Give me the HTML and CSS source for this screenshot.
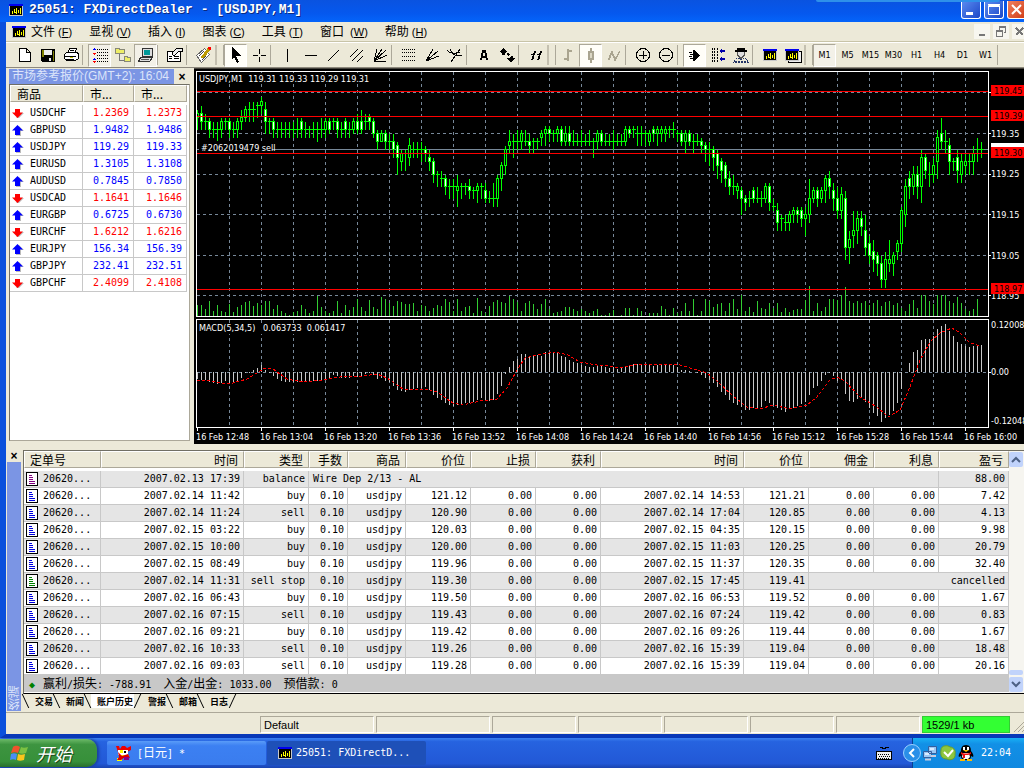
FILE: index.html
```html
<!DOCTYPE html>
<html lang="zh-CN">
<head>
<meta charset="utf-8">
<title>25051: FXDirectDealer - [USDJPY,M1]</title>
<link rel="stylesheet" href="styles.css">
</head>
<body>
<svg class="defs" aria-hidden="true">
  <symbol id="app" viewBox="0 0 14 12"><path fill="#0000f0" d="M0 0h14v2H0z"/><path fill="#c8c8c8" d="M0 2h14v10H0z"/><path fill="#000" d="M1 2h12v9H1z"/><path fill="#ff0" d="M3 7h1v3H3zM5 5h1v4H5zM7 4h1v6H7zM6 8h1v1H6zM9 6h1v3H9zM11 4h1v6h-1z"/></symbol>
  <symbol id="doc" viewBox="0 0 12 14"><path fill="#fff" stroke="#000" d="M.5.500h11v13H.5z"/><path stroke="currentColor" d="M3 3.500h3M3 5.500h4M3 7.500h4M3 9.500h6M3 11.500h6"/></symbol>
  <symbol id="up" viewBox="0 0 12 11"><path fill="#bbb" d="M7 1l5 5H9v5H4V9z"/><path fill="#00f" d="M5.500 0L11 5.500H8V10H3V5.500H0z"/></symbol>
  <symbol id="down" viewBox="0 0 12 11"><path fill="#bbb" d="M4 10h3l5-5H9z"/><path fill="red" d="M5.500 10L0 4.500h3V1h5v3.500h3z"/></symbol>
</svg>
<div class="window">
  <header class="title">
    <svg class="appicon"><use href="#app"/></svg>
    <h1>25051: FXDirectDealer - [USDJPY,M1]</h1>
    <div class="winbtns">
      <button aria-label="最小化"><svg width="20" height="18"><path fill="#fff" d="M5 11h7v3H5z"/></svg></button>
      <button aria-label="最大化"><svg width="20" height="18"><path fill="none" stroke="#fff" d="M4.500 4.500h11v9h-11zM4 5.500h12M4 3.500h12"/></svg></button>
      <button class="close" aria-label="关闭"><svg width="20" height="18"><path stroke="#fff" stroke-width="2" d="M5 4l9 9M14 4l-9 9"/></svg></button>
    </div>
    <span class="behind"></span>
  </header>
  <nav class="menu">
    <svg class="appicon"><use href="#app"/></svg>
    <button>文件<small> (<u>F</u>)</small></button><button>显视<small> (<u>V</u>)</small></button><button>插入<small> (<u>I</u>)</small></button><button>图表<small> (<u>C</u>)</small></button><button>工具<small> (<u>T</u>)</small></button><button>窗口<small> &nbsp;(<u>W</u>)</small></button><button>帮助<small> (<u>H</u>)</small></button>
    <div class="mdi">
      <button aria-label="最小化窗口"><svg width="16" height="14"><path fill="#777" d="M5 9h6v2H5z"/></svg></button>
      <button aria-label="还原窗口"><svg width="16" height="14"><path fill="none" stroke="#777" d="M6.500 5V2.500h6v5H11M3.500 6.500h6v5h-6zM3 5.500h7M6 1.500h7"/></svg></button>
      <button aria-label="关闭窗口"><svg width="16" height="14"><path stroke="#777" stroke-width="2" d="M4 3l7 7M11 3l-7 7"/></svg></button>
    </div>
  </nav>
  <div class="toolbar">
    <button aria-label="新建"><svg><path fill="#fff" stroke="#000" d="M3.500 2.500h7l4 4v9h-11zM10.500 2.500v4h4"/></svg></button>
    <button aria-label="保存"><svg><path d="M2 3h14v13H3l-1-1z"/><path fill="#808000" d="M3 4h2v7H3zM14 5h1v10h-1z"/><path fill="#eee" d="M5 4h8v5H5zM10 12h2v3h-2z"/></svg></button>
    <button aria-label="打印"><svg><path fill="#fff" stroke="#000" d="M5.500 7.500l2-5h7l-2 5M2.500 8.500l2-2h11l1 2v4l-3 2h-9l-2-2zM2 10.500h12M4 13.500h8M8 4.500h4"/><path stroke="#cc0" d="M8 11.500h3"/></svg></button>
    <i></i>
    <button class="on" aria-label="市场参考报价"><svg><path fill="none" stroke="#000" stroke-dasharray="1 1" d="M6 3.500h12M6 6.500h12M6 9.500h12M6 12.500h12M6 15.500h12"/><path fill="#00f" d="M3 2l2 2H1zM3 12l2 2H1z"/><path fill="red" d="M3 9l2-2H1zM3 17l2-2H1z"/></svg></button>
    <button aria-label="导航"><svg><path fill="none" stroke="#777" d="M5.500 6v8h5"/><path fill="#ee6" stroke="#887" d="M1.500 2.500h4v1h5v4h-9zM10.500 10.500h3v1h3v4h-6z"/></svg></button>
    <button class="on" aria-label="终端"><svg><path fill="#ddd" stroke="#333" d="M5.500 2.500h10v8h-10zM3.500 11.500h12l-3 4H1.500z"/><path fill="#099" d="M7 4h6v5H7z"/><path stroke="#555" d="M4 13.500h8"/></svg></button>
    <i></i>
    <button aria-label="属性"><svg><path fill="#fff" stroke="#000" d="M1.500 5.500h13v10h-13zM3 10.500h3M3 12.500h3M8 10.500h5M8 12.500h5"/><path fill="#eee" stroke="#000" d="M6 7l4-4 1-1h5v3h-3l-4 4H7z"/></svg></button>
    <i></i>
    <button aria-label="新订单"><svg><path fill="#fff" stroke="#666" d="M1.500 9.500l8-7 5 6-8 8z"/><path stroke="#444" d="M4 10l5-5M6 12l5-5M7 14l4-4"/><path stroke="#b90" stroke-width="3" d="M7 12l7-9"/><path fill="red" d="M13 1h3v3h-2z"/></svg></button>
    <i class="grip"></i>
    <button class="on white" aria-label="光标"><svg><path d="M5 1l9 9H9l3 6-2 1-3-6-2 2z"/></svg></button>
    <button aria-label="十字准线"><svg><path stroke="#000" d="M3 9.500h5M11 9.500h5M9.500 3v5M9.500 11v5"/></svg></button>
    <i></i>
    <button aria-label="垂直线"><svg><path stroke="#000" d="M8.500 3v13"/></svg></button>
    <button aria-label="水平线"><svg><path stroke="#000" d="M3 9.500h12"/></svg></button>
    <button aria-label="趋势线"><svg><path stroke="#000" d="M3 15L14 4"/></svg></button>
    <button aria-label="通道"><svg><path stroke="#000" d="M2 11l8-8M4 15L15 4M9 16l6-6"/></svg></button>
    <button aria-label="江恩扇形"><svg><path stroke="#000" d="M3 15L6 3M3 15L11 3M3 15L15 4M3 15L16 9M3 15h12"/></svg></button>
    <i></i>
    <button aria-label="斐波那契回撤"><svg><path stroke="#000" stroke-dasharray="1 1" d="M2 3.500h14M2 6.500h14M2 10.500h14M2 14.500h14"/></svg></button>
    <button aria-label="斐波那契扇形"><svg><path stroke="#000" d="M3 15L10 3M3 15L15 5M3 15L16 10"/></svg></button>
    <button aria-label="安德鲁分叉"><svg><path fill="none" stroke="#000" d="M5 16L14 3M1 4c2 3 7 4 13 2M4 3c2 6 6 7 12 7"/></svg></button>
    <i></i>
    <button aria-label="文字"><svg><path fill="none" stroke="#000" stroke-width="2" d="M6 14L8 5h2l2 9M6 11h6"/></svg></button>
    <button aria-label="箭头"><svg><path d="M1 6l4-4 4 4-2 1v2H4V7zM9 12h3l1-2h2v2h2l-3 4h-2zM8 8l2-1 2 2-2 1z"/></svg></button>
    <i></i>
    <button aria-label="指标"><svg><path fill="none" stroke="#000" d="M4 14c2 0 2-9 5-9M4 8.500h4M10 14c2 0 2-9 5-9M10 8.500h4"/><path fill="none" stroke="#000" d="M5 14c2 0 1-8 4-8M11 14c2 0 1-8 4-8"/></svg></button>
    <i class="grip"></i>
    <button aria-label="柱状图"><svg><path stroke="#aaa590" stroke-width="2" d="M9 3v12M5 13h4M9 5h4"/></svg></button>
    <button class="on white" aria-label="蜡烛图"><svg><path fill="#dcd8c4" stroke="#aaa590" stroke-width="2" d="M9 2v3M9 14v3M7 6h4v7H7z"/></svg></button>
    <button aria-label="折线图"><svg><path fill="none" stroke="#aaa590" d="M3 14L7 5l3 8 5-8M4 14L7 7l3 8 4-8"/></svg></button>
    <i></i>
    <button aria-label="放大"><svg><circle cx="9" cy="9" r="6.500" fill="none" stroke="#000"/><path stroke="#000" d="M5 9.500h8M9.500 5v8"/></svg></button>
    <button aria-label="缩小"><svg><circle cx="9" cy="9" r="6.500" fill="none" stroke="#000"/><path stroke="#000" d="M5 9.500h8"/></svg></button>
    <i></i>
    <button class="on white" aria-label="自动滚动"><svg><path d="M7 4h2l5 5.500L9 15H7zM3 6h3v1H3zM4 8h3v1H4zM3 10h3v1H3zM4 12h3v1H4z"/></svg></button>
    <button aria-label="图表平移"><svg><path fill="none" stroke="#000" stroke-dasharray="2 1" d="M3.500 2v14M5.500 2v14M8.500 2v14"/><path fill="#00a" d="M10 5l3-3v2h3v2h-3v2zM10 13l3-3v2h3v2h-3v2z"/></svg></button>
    <button aria-label="智能交易"><svg><path d="M5 2h8v2h2v2H3V4h2z"/><path fill="#ddd" stroke="#555" d="M5.500 6v3l3 3h1l3-3V6"/><path fill="none" stroke="#236" stroke-dasharray="2 1" d="M2 16c1-4 4-4 5-4l2 2 2-2c2 0 4 1 5 4zM3 15.500h12"/></svg></button>
    <i></i>
    <button aria-label="图表窗口"><svg><use href="#app" x="2" y="3" width="14" height="12"/></svg></button>
    <button aria-label="多图表窗口"><svg><path fill="#eee" stroke="#000" d="M4.500 5.500h13v11h-13z"/><use href="#app" x="1" y="3" width="14" height="12"/></svg></button>
    <i class="grip"></i>
    <button class="on">M1</button><button>M5</button><button>M15</button><button>M30</button><button>H1</button><button>H4</button><button>D1</button><button>W1</button>
    <i></i>
  </div>
  <main class="work">
    <section class="market">
      <div class="caption"><h2>市场参考报价(GMT+2): 16:04</h2><button aria-label="关闭报价">×</button></div>
      <div class="well">
        <table class="quotes">
          <colgroup><col class="q1"><col class="q2"><col></colgroup>
          <thead><tr><th>商品</th><th>市...</th><th>市...</th></tr></thead>
          <tbody id="quotes"></tbody>
        </table>
      </div>
    </section>
    <section class="chart"><svg id="chart" role="img" aria-label="USDJPY,M1"></svg></section>
  </main>
  <section class="terminal">
    <div class="side"><button aria-label="关闭终端">×</button><h2>终端</h2></div>
    <div class="tbody">
      <div class="grid">
        <div class="gridmain">
          <table class="orders">
            <colgroup><col class="c77"><col class="c143"><col class="c65"><col class="c39"><col class="c58"><col class="c65"><col class="c65"><col class="c65"><col class="c143"><col class="c65"><col class="c65"><col class="c65"><col></colgroup>
            <thead><tr><th>定单号</th><th>时间</th><th>类型</th><th>手数</th><th>商品</th><th>价位</th><th>止损</th><th>获利</th><th>时间</th><th>价位</th><th>佣金</th><th>利息</th><th>盈亏</th></tr></thead>
            <tbody id="orders"></tbody>
          </table>
          <p class="sum"><span class="dot">◆</span><span class="zh">赢利</span>/<span class="zh">损失</span>: -788.91&nbsp; <span class="zh">入金</span>/<span class="zh">出金</span>: 1033.00&nbsp; <span class="zh">预借款</span>: 0</p>
        </div>
        <div class="scroll">
          <button aria-label="向上"><svg width="14" height="15"><path fill="none" stroke="#4d6185" stroke-width="2" d="M3 10l4-4 4 4"/></svg></button>
          <span class="thumb"></span>
          <button aria-label="向下"><svg width="14" height="15"><path fill="none" stroke="#4d6185" stroke-width="2" d="M3 5l4 4 4-4"/></svg></button>
        </div>
      </div>
      <div class="tabs"><button>交易</button><button>新闻</button><button class="active">账户历史</button><button>警报</button><button>邮箱</button><button class="last">日志</button></div>
    </div>
  </section>
  <footer class="status"><span class="help"></span><span class="wide">Default</span><span class="wide"></span><span></span><span></span><span></span><span></span><span></span><span class="net">1529/1 kb</span><svg width="12" height="16"><path stroke="#aca899" d="M2 16L12 6M6 16l6-6M10 16l2-2"/></svg></footer>
</div>
<div class="taskbar">
  <button class="start"><svg width="20" height="20"><path fill="#f0532c" d="M3 4c3-2 5-1 7 0L8 10c-2-1-4-1-7 0z"/><path fill="#7cc142" d="M11 4c2 1 4 1 7 0l-2 6c-3 1-5 1-7 0z"/><path fill="#4a8df6" d="M1 11c2-1 4-1 6 0l-1 6c-2-1-4-1-6 0z"/><path fill="#fbc61c" d="M8 11c2 1 4 1 7 0l-1 6c-3 1-5 1-7 0z"/></svg>开始</button>
  <button class="task"><svg width="18" height="18"><path fill="#e00" d="M1 2h3l1 3 2-3h3l2 2 4-2v4l-4 2H3z"/><path fill="#fff" d="M3 6h10v5H3z"/><path fill="#ff0" d="M5 6h3v3H5zM4 11h10v2H4zM2 14h5v3H2z"/><path d="M9 7h2v2H9zM5 13h2v1H5z"/><path fill="#d00" d="M3 8l4 4 6-2 2 4-5-1-4 3H2l2-3z"/><path fill="#808" d="M9 13h5v3H9z"/></svg><span>[<span class="zh">日元</span>] *</span></button>
  <button class="task current"><svg class="appicon"><use href="#app"/></svg>25051: FXDirectD...</button>
  <div class="room"></div>
  <svg class="kbd" width="18" height="16"><path fill="#eee" stroke="#000" d="M1.500 6.500h15v8h-15z"/><path fill="none" stroke="#000" stroke-dasharray="1 1" d="M3 9.500h12M4 11.500h11M3 13.500h12"/><path fill="none" stroke="#000" d="M5 2.500h2l1 1h2l1-1h3"/></svg>
  <div class="tray">
    <svg class="arrow" width="18" height="20"><circle cx="9" cy="10" r="8.500" fill="#2a8fe8" stroke="#9cd0ff"/><path fill="none" stroke="#fff" stroke-width="2" d="M11 6l-4 4 4 4"/></svg>
    <svg width="16" height="18"><path fill="#9cc8f4" stroke="#345f9e" d="M6.500 2.500h8v7h-8zM1.500 7.500h8v6h-8z"/><path fill="#dcecff" d="M3 9h4v2H3zM8 4h4v2H8z"/><path stroke="#ccd" stroke-width="2" d="M3 15.500h6M9 12h5"/></svg>
    <svg width="18" height="18"><path fill="#8dc63f" stroke="#6b9f2a" d="M2 6c0-5 7-5 9-3 4 0 6 4 5 7 1 5-5 7-8 5-5 0-7-3-6-9z"/><path fill="none" stroke="#fff" stroke-width="2" d="M5 8l4 4 5-6"/></svg>
    <svg width="16" height="18"><path d="M8 1c4 0 5 3 5 6 2 2 3 5 2 6l-2-1c0 3-2 4-5 4s-5-1-5-4l-2 1c-1-1 0-4 2-6 0-3 1-6 5-6z"/><path fill="#fff" d="M5 3h2v3H5zM9 3h2v3H9zM5 9h6l1 4-2 2H6l-2-2z"/><path fill="#fb0" d="M5 6h6l-3 2zM2 15h5v2H2zM9 15h5v2H9z"/><path fill="#e11" d="M3 8c3 2 7 2 10 0v2c-2 1-4 1-6 1v3H5v-3l-2-1z"/></svg>
    <time>22:04</time>
  </div>
</div>
<script src="app.js"></script>
</body>
</html>
```
FILE: styles.css
```css
* { box-sizing: border-box; }
body { margin: 0; height: 100vh; min-height: 600px; display: flex; flex-direction: column; overflow: hidden; font: 10px/16px "DejaVu Sans Mono", "Noto Sans CJK SC", monospace; color: #000; background: #2158d8; }
button { font: inherit; color: inherit; border: 0; padding: 0; background: none; }
h1, h2, p { margin: 0; font-size: inherit; font-weight: normal; }
table { border-collapse: separate; border-spacing: 0; table-layout: fixed; width: 100%; }
svg { display: block; flex: none; }
.defs { position: absolute; width: 0; height: 0; }
.zh { font: 12px/16px "Noto Sans CJK SC", sans-serif; }
.appicon { width: 14px; height: 12px; shape-rendering: crispEdges; }

.window { flex: 1; min-height: 0; display: flex; flex-direction: column; border-left: 6px solid #0a50dc; border-bottom: 4px solid #0838b8; background: #ece9d8; }
.title { flex: none; position: relative; height: 22px; margin-left: -6px; padding: 0 0 2px 9px; display: flex; align-items: center; gap: 6px; color: #fff; background: linear-gradient(#0a53e0, #0558ee 60%, #0464fa); overflow: hidden; }
.title h1 { flex: 1; font: bold 13px/18px "Liberation Mono", monospace; text-shadow: 1px 1px #0a2a80; }
.winbtns { display: flex; gap: 3px; margin-right: -3px; }
.winbtns button { width: 20px; height: 18px; border: 1px solid #fff; border-top: 0; border-radius: 0 0 3px 3px; background: linear-gradient(135deg, #5b8bf0, #1c48c8); }
.winbtns svg { margin-left: -1px; }
.winbtns .close { background: linear-gradient(135deg, #f08060, #d03c14); }
.behind { position: absolute; top: 0; right: 24px; width: 184px; height: 2px; background: #2e90ea; border-radius: 0 0 4px 4px; }

.menu { flex: none; height: 20px; display: flex; align-items: center; padding-left: 6px; font: 12px/18px "Noto Sans CJK SC", sans-serif; border-bottom: 1px solid #c8c4a8; }
.menu > button { margin-left: 5px; padding-right: 12px; white-space: nowrap; }
.menu small { font: 11px/18px "Liberation Sans", sans-serif; }
.mdi { margin-left: auto; margin-right: -4px; display: flex; gap: 3px; }
.mdi button { width: 16px; height: 15px; background: #f7f6ef; }
.mdi svg { shape-rendering: crispEdges; }

.toolbar { flex: none; height: 26px; display: flex; align-items: center; padding: 1px 0 1px 7px; border-bottom: 1px solid #8c887c; border-top: 1px solid #fff; font: 9px/18px "DejaVu Sans Condensed", "DejaVu Sans", sans-serif; }
.toolbar button { flex: none; width: 23px; height: 23px; display: flex; align-items: center; justify-content: center; border: 1px solid transparent; }
.toolbar svg { width: 18px; height: 18px; shape-rendering: crispEdges; }
.toolbar .on { border-color: #aca899 #fff #fff #aca899; background: #f3f1e8; }
.toolbar .white { background: #fffef8; }
.toolbar i { flex: none; width: 6px; height: 20px; border-left: 1px solid #aca899; }
.toolbar .grip { width: 9px; border-left: 2px solid #c4c0b0; border-right: 1px solid #aca899; }

.work { flex: 1; min-height: 0; display: flex; }
.market { flex: none; width: 188px; padding: 1px 4px 3px 3px; display: flex; flex-direction: column; }
.caption { display: flex; height: 15px; font: 12px/14px "Liberation Sans", "Noto Sans CJK SC", sans-serif; color: #dce4fa; }
.caption h2 { flex: 1; padding-left: 3px; background: #7b95e4; white-space: nowrap; overflow: hidden; }
.caption button { width: 16px; color: #000; font: bold 12px/14px "Liberation Sans", sans-serif; }
.well { flex: 1; background: #fff; border: 1px solid #aca899; border-left-color: #716f64; border-top-color: #716f64; }
th { font: 12px/14px "Noto Sans CJK SC", sans-serif; height: 17px; padding: 0; background: #ece9d8; border: 1px solid #fff; border-right-color: #aca899; border-bottom-color: #aca899; white-space: nowrap; overflow: hidden; }
td { height: 17px; padding: 0 3px 0 0; line-height: 16px; border-right: 1px solid #c8c8c8; border-bottom: 1px solid #c8c8c8; text-align: right; white-space: nowrap; overflow: hidden; }
tbody::before { content: ""; display: block; height: 3px; }
.q1 { width: 73px; } .q2 { width: 51px; }
.well { padding-right: 2px; }
.quotes th { text-align: left; padding-left: 6px; }
.quotes td { padding-right: 4px; }
.quotes td:first-child { padding: 0 2px; color: #000; text-align: left; }
.sym { display: flex; align-items: center; gap: 6px; }
.sym svg { width: 12px; height: 11px; }
.rise td { color: #00f; } .fall td { color: #f00; }

.chart { flex: 1; min-width: 0; background: #000; border-top: 1px solid #44423c; overflow: hidden; }
.chart svg { width: 100%; height: 100%; font: 9px "DejaVu Sans Condensed", "DejaVu Sans", sans-serif; shape-rendering: crispEdges; }
.grid-l { stroke: #778899; stroke-dasharray: 3 3; }
.level { stroke: #f00; } .bid { stroke: #778899; }
.frame { fill: none; stroke: #fff; }
.wick, .body { stroke: #0f0; } .hollow { fill: #000; } .solid { fill: #fff; }
.vol { stroke: #32cd32; } .macd { stroke: #c8c8c8; }
.signal { fill: none; stroke: #f00; stroke-dasharray: 3 2; }
.lbl { fill: #fff; } .dark { fill: #000; } .tag { fill: #f00; }

.terminal { flex: none; display: flex; padding-top: 6px; }
.side { flex: none; width: 17px; padding: 0 2px 1px 1px; display: flex; flex-direction: column; }
.side button { height: 12px; font: bold 12px/10px "Liberation Sans", sans-serif; }
.side h2 { flex: 1; writing-mode: vertical-rl; transform: rotate(180deg); background: #7b95e4; color: #dce4fa; font: 12px/14px "Noto Sans CJK SC", sans-serif; padding-top: 1px; }
.tbody { flex: 1; min-width: 0; }
.grid { display: flex; border-top: 1px solid #716f64; border-left: 1px solid #716f64; border-bottom: 1px solid #000; background: #fff; }
.gridmain { flex: 1; min-width: 0; padding-bottom: 1px; }
.c77 { width: 77px; } .c143 { width: 143px; } .c65 { width: 65px; } .c39 { width: 39px; } .c58 { width: 58px; }
.orders th { text-align: right; padding-right: 5px; }
.orders th:first-child { text-align: left; padding-left: 5px; }
.orders tbody tr:nth-child(odd) { background: #e5e5e5; }
.orders td:first-child { padding-left: 2px; }
.orders .left { text-align: left; padding-left: 4px; }
.ord { display: flex; align-items: center; gap: 5px; }
.ord svg { width: 12px; height: 14px; shape-rendering: crispEdges; }
.sum { height: 17px; line-height: 16px; background: #c8c8c8; white-space: pre; }
.dot { display: inline-block; width: 19px; padding-left: 5px; color: #008000; }
.scroll { flex: none; width: 15px; display: flex; flex-direction: column; background: #f6f5f0; padding: 1px 0; }
.scroll button { width: 14px; height: 15px; border-radius: 2px; background: #c1d3fb; }
.thumb { height: 5px; width: 14px; margin: auto 0 2px; border-radius: 2px; background: #c1d3fb; }
.tabs { display: flex; height: 18px; padding-left: 2px; font: bold 9px/16px "Noto Sans CJK SC", sans-serif; }
.tabs button { position: relative; height: 15px; padding: 0 3px 0 10px; }
.tabs button::before, .tabs .active::after, .tabs .last::after { content: ""; position: absolute; top: 0; bottom: 1px; left: 0; width: 10px; border-left: 1px solid #000; transform: skewX(25deg); }
.tabs .active, .tabs .last { padding-right: 5px; }
.tabs .active { background: linear-gradient(#fff, #fff) 4px 0 / calc(100% - 8px) 14px no-repeat; }
.tabs .active::after, .tabs .last::after { left: auto; right: 0; border-left: 0; border-right: 1px solid #000; transform: skewX(-25deg); }
.tabs .active + button::before { border: 0; }

.status { flex: none; height: 22px; display: flex; gap: 2px; padding: 3px 0 1px; border-top: 1px solid #aca899; font: 11px/17px "Liberation Sans", sans-serif; }
.status span { flex: none; width: 84px; padding-left: 3px; border: 1px solid #aca899; border-right-color: #fff; border-bottom-color: #fff; line-height: 16px; }
.status .help { flex: 1; border-color: transparent; }
.status .wide { width: 114px; }
.status .net { width: 88px; background: #3f3; border-color: #3c3; }

.taskbar { flex: none; height: 30px; display: flex; align-items: center; color: #fff; background: linear-gradient(#3b80f0, #2663e0 12%, #2258d6 85%, #1a44b0); }
.start { width: 97px; height: 28px; display: flex; align-items: center; gap: 6px; padding-left: 10px; border-radius: 0 10px 10px 0; background: linear-gradient(#6cb968, #3d9440 20%, #37903a 80%, #2a6e2c); font: italic 18px/24px "Noto Sans CJK SC", sans-serif; text-shadow: 1px 1px #1a4a1c; box-shadow: 2px 0 3px #1a3f9a; }
.task { width: 159px; height: 24px; margin-left: 10px; display: flex; align-items: center; gap: 4px; padding-left: 8px; border-radius: 2px; background: linear-gradient(#5a9cf8, #3c80f2 20%, #3a7cee); text-align: left; white-space: nowrap; }
.current { margin-left: 1px; padding-left: 11px; background: #1e50b8; }
.room { flex: 1; }
.kbd { margin-right: 19px; shape-rendering: crispEdges; }
.tray { height: 30px; display: flex; align-items: center; gap: 1px; padding-right: 13px; background: linear-gradient(#18b0f4, #1290e6 20%, #1088e0); border-left: 1px solid #0a4090; }
.arrow { margin-left: -10px; }
.tray time { margin-left: 6px; }
```
FILE: app.js
```js
const quotes = `USDCHF 1.2369 1.2373 fall
GBPUSD 1.9482 1.9486 rise
USDJPY 119.29 119.33 rise
EURUSD 1.3105 1.3108 rise
AUDUSD 0.7845 0.7850 rise
USDCAD 1.1641 1.1646 fall
EURGBP 0.6725 0.6730 rise
EURCHF 1.6212 1.6216 fall
EURJPY 156.34 156.39 rise
GBPJPY 232.41 232.51 rise
GBPCHF 2.4099 2.4108 fall`;
document.getElementById('quotes').innerHTML = quotes.split('\n').map(line => {
  const [name, bid, ask, dir] = line.split(' ');
  return `<tr class="${dir}"><td><span class="sym"><svg><use href="#${dir === 'rise' ? 'up' : 'down'}"/></svg>${name}</span></td><td>${bid}</td><td>${ask}</td></tr>`;
}).join('');

const first = color => `<td><span class="ord"><svg color="${color}"><use href="#doc"/></svg>20620...</span></td>`;
const orders = `02.14 11:42|buy|121.12|02.14 14:53|121.21|7.42
02.14 11:24|sell|120.90|02.14 17:04|120.85|4.13
02.15 03:22|buy|120.03|02.15 04:35|120.15|9.98
02.15 10:00|buy|120.00|02.15 11:03|120.25|20.79
02.15 08:49|buy|119.96|02.15 11:37|120.35|32.40
02.14 11:31|sell stop|119.30|02.15 17:45|119.41|cancelled
02.16 06:43|buy|119.50|02.16 06:53|119.52|1.67
02.16 07:15|sell|119.43|02.16 07:24|119.42|0.83
02.16 09:21|buy|119.42|02.16 09:26|119.44|1.67
02.16 10:33|sell|119.26|02.16 15:39|119.04|18.48
02.16 09:03|sell|119.28|02.16 15:39|119.04|20.16`;
document.getElementById('orders').innerHTML =
  `<tr>${first('#800080')}<td>2007.02.13 17:39</td><td>balance</td><td colspan="9" class="left">Wire Dep 2/13 - AL</td><td>88.00</td></tr>` +
  orders.split('\n').map(line => {
    const [opened, type, open, closed, close, profit] = line.split('|');
    const cancelled = profit === 'cancelled';
    return `<tr>${first(cancelled ? '#008000' : '#0000e0')}<td>2007.${opened}</td><td>${type}</td><td>0.10</td><td>usdjpy</td><td>${open}</td><td>0.00</td><td>0.00</td><td>2007.${closed}</td><td>${close}</td>` +
      (cancelled ? '<td colspan="3">cancelled</td>' : `<td>0.00</td><td>0.00</td><td>${profit}</td>`) + '</tr>';
  }).join('');

// Each bar: high, low, open/close top, open/close bottom (pips above 119.00); f = falling
const bars = `41 36 40 39,42 36 40 38f,40 36 38,39 34 38 36f,38 34 36,38 33 36,39 34 38 36,39 36 38,39 34 38 36f,38 34 36,39 34 38 36,41 36 39 38,42 38 41 39,43 38 41,43 38 41,43 39 42,44 40 43 42,43 35 41 38f,39 35 38,39 34 38 36f,38 34 36,38 34 36,38 34 36,38 34 36,38 34 36,39 34 36,39 34 38 36f,38 34 36,37 34 36,38 34 36,38 33 36,39 34 36,39 34 38 36,39 35 38 36f,39 36 38,39 34 38 36f,38 34 36,39 34 38 36f,38 34 36,39 35 38 36,40 35 38 36f,41 35 38 36f,40 36 38,40 36 39 38f,39 34 38 35f,36 31 35 33f,36 33 35 33,36 31 35 33f,35 31 33,35 29 33 31f,33 25 32 29f,31 26 30 28,31 26 30,34 27 32 29,33 29 31,33 29 31,33 28 31,32 28 31 30f,31 26 29 28f,29 23 28 25f,26 22 25,26 22 24,25 20 24 22f,24 19 22,24 19 22,25 17 22 21,23 19 22,23 20 22,24 19 22 21f,22 19 21,23 18 22 21,23 19 22,23 18 21 19f,21 18 19,23 17 19,25 17 24 19,28 21 27 24,32 25 31 27,36 30 33 32,35 29 33,36 31 33,36 31 35 33,36 32 33,35 30 33 32f,34 30 33,34 31 33,36 32 35 34,37 32 36 35,37 33 36 35f,36 33 35,37 33 36 35,37 32 36 33f,37 32 35 33,37 32 35 33f,36 32 33,35 32 33,36 32 33,35 32 33,36 32 33,34 29 33,36 31 35 33,36 32 35 33f,35 32 33,35 32 33,36 31 33,35 32 33,35 32 33,37 32 36 33,37 34 36 35f,37 34 36,37 32 35,37 32 35,36 32 35,36 32 35 33,37 33 36 35f,37 32 36 35,37 33 36 35,37 33 36 35,37 34 36,38 34 36,36 33 35,36 32 35 33f,36 30 35 33,36 32 35 33f,35 30 33,35 32 33,34 30 33 32f,33 28 32 31f,33 27 31,32 26 31 29f,31 24 30 27f,29 23 28 26f,28 22 27 24f,26 20 24 22f,25 20 22,23 19 22 21,22 15 21 19f,20 16 19 18f,21 17 19,22 18 21 19f,22 18 19,21 17 19,23 18 22 19,23 16 22 18f,19 16 17,18 11 16 13f,15 11 14,15 11 13,16 11 15 13,17 13 16 15,17 13 16 15f,17 12 16 14f,17 10 15 14,24 13 19 15,22 18 21 19,22 17 21 19f,22 18 21 19,25 18 24 21,26 19 24 22f,23 16 21 19f,22 14 19 16f,22 14 20 16,21 4 19 7f,11 3 9 7,16 7 11 10,16 8 14 11,16 10 14 12f,15 5 11 7f,10 3 8 5f,9 1 6 4f,6 0 5 3f,5 -3 3 -1f,6 -3 4 -1,9 1 4 3,6 0 5 3,9 4 8 6,17 6 16 8,24 12 22 15,26 19 24 22f,27 20 25 22,27 19 25 22f,31 18 29 22,30 24 29 26f,28 22 25,29 23 27 25,36 24 34 28,39 31 35 33f,36 30 33,34 25 32 28f,29 26 28,31 23 29 26f,30 23 28 25,30 25 28 27,30 25 28,32 25 30 28,34 28 31,33 29 31`.split(',');
const volume = [11,11,7,15,5,11,5,4,12,4,9,11,14,15,10,13,11,15,15,7,11,5,3,1,4,5,11,7,3,5,20,9,5,3,5,15,3,11,6,9,17,9,5,16,9,7,19,17,13,10,15,14,12,12,13,5,11,10,5,8,11,10,17,14,5,17,5,9,10,3,18,5,3,10,14,16,14,13,20,17,14,5,13,15,12,7,12,17,7,3,4,5,9,9,7,5,7,5,3,5,7,1,1,3,6,0,1,8,8,1,8,5,0,3,3,3,10,7,1,8,3,5,13,5,17,1,5,17,15,9,12,13,5,13,17,7,21,5,9,4,15,8,7,13,8,13,4,8,4,6,7,7,16,30,5,13,5,9,17,17,16,21,29,15,13,15,13,15,11,13,16,10,14,15,11,13,8,5,12,16,8,21,21,15,12,21,21,21,15,13,19,13,7,5,7,17,0];
const macd = [7,8,8,10,11,12,11,9,11,11,10,6,1,1,-2,-4,-7,-2,1,4,7,9,10,10,10,10,10,10,9,9,9,9,8,7,3,4,6,6,6,4,5,5,2,1,3,7,6,9,10,14,18,19,20,18,17,16,16,15,18,23,26,28,31,33,34,33,33,31,31,30,28,26,28,29,28,22,14,2,-5,-11,-13,-18,-18,-16,-16,-17,-16,-20,-19,-19,-20,-16,-15,-12,-10,-9,-7,-6,-5,-5,-6,-6,-5,-4,-5,-3,-4,-6,-7,-8,-8,-8,-8,-7,-6,-7,-7,-7,-7,-7,-5,-2,-2,-1,0,1,3,6,8,11,15,20,23,28,31,33,35,38,38,36,36,35,29,31,33,36,38,40,37,36,34,32,30,23,16,14,9,3,1,4,9,7,22,29,30,27,26,30,36,41,44,50,46,43,39,31,17,0,-9,-20,-22,-32,-33,-33,-36,-43,-46,-48,-41,-36,-30,-28,-26,-25,-26,-27,-27];
const signal = '3,311 13,311 26,314 39,314 53,310 63,304 71,299 79,300 93,310 109,313 129,311 146,308 169,307 183,305 193,309 209,320 218,321 233,320 243,323 259,334 269,336 286,332 303,330 313,319 323,301 331,289 343,286 361,283 374,286 386,293 403,296 415,297 426,299 443,295 483,295 503,301 513,304 523,312 539,327 553,338 566,340 579,336 596,340 613,336 623,328 636,311 643,308 651,312 666,328 683,338 694,348 706,341 716,318 726,291 736,273 746,264 758,259 766,264 776,274 787,277';

const line = (cls, x1, y1, x2, y2) => `<path class="${cls}" d="M${x1} ${y1}L${x2} ${y2}"/>`;
const text = (x, y, s, cls = 'lbl') => `<text class="${cls}" x="${x}" y="${y}" xml:space="preserve">${s}</text>`;
const py = p => Math.round(64 + (35 - p) * 4.06) + .5;
const out = [];
for (let x = 35.5; x < 794; x += 32) out.push(line('grid-l', x, 3, x, 247), line('grid-l', x, 251, x, 358));
[45, 35, 25, 15, 5, -5].forEach(p => out.push(line('grid-l', 3, py(p), 794, py(p)), line('frame', 794, py(p), 797, py(p))));
out.push(line('grid-l', 3, 303.5, 794, 303.5), line('frame', 794, 303.5, 797, 303.5));
volume.forEach((v, i) => v && out.push(line('vol', 3.5 + i * 4, 247, 3.5 + i * 4, 247 - v)));
out.push(line('bid', 3, 80.5, 794, 80.5));
bars.forEach((b, i) => {
  const [hi, lo, top, bottom] = b.replace('f', '').split(' ').map(Number);
  const x = 3.5 + i * 4;
  out.push(line('wick', x, py(hi), x, py(lo)));
  if (bottom === undefined) out.push(line('wick', x - 2, py(top), x + 2, py(top)));
  else out.push(`<rect class="body ${b.endsWith('f') ? 'solid' : 'hollow'}" x="${x - 1}" y="${py(top)}" width="2" height="${py(bottom) - py(top)}"/>`);
});
[22.5, 47.5, 84.5, 220.5].forEach(y => out.push(line('level', 3, y, 794, y)));
macd.forEach((v, i) => v && out.push(line('macd', 3.5 + i * 4, 303, 3.5 + i * 4, 303 + v)));
out.push(`<polyline class="signal" points="${signal}"/>`);
out.push('<rect x="5" y="72" width="73" height="12"/>', '<rect x="4" y="4" width="182" height="11"/>', '<rect x="4" y="254" width="154" height="11"/>');
out.push('<rect class="frame" x="2.5" y="2.5" width="792" height="245"/><rect class="frame" x="2.5" y="250.5" width="792" height="108"/>');
out.push(text(5, 13, 'USDJPY,M1  119.31 119.33 119.29 119.31'), text(7, 82, '#2062019479 sell'), text(5, 262, 'MACD(5,34,5)   0.063733  0.061417'));
[[68, '119.35'], [108, '119.25'], [149, '119.15'], [190, '119.05'], [230, '118.95'], [259, '0.12008'], [306, '0.00'], [355, '-0.12048']].forEach(([y, s]) => out.push(text(797, y, s)));
out.push('<rect class="lbl" x="797" y="74" width="60" height="6"/>');
[[16, '119.45'], [41, '119.39'], [78, '119.30'], [214, '118.97']].forEach(([y, s]) => out.push(`<rect class="tag" x="797" y="${y}" width="60" height="11"/>`, text(800, y + 9, s, 'dark')));
['12:48', '13:04', '13:20', '13:36', '13:52', '14:08', '14:24', '14:40', '14:56', '15:12', '15:28', '15:44', '16:00'].forEach((t, k) =>
  out.push(line('frame', 3.5 + k * 64, 359, 3.5 + k * 64, 362), text(2 + k * 64, 371, '16 Feb ' + t)));
document.getElementById('chart').innerHTML = out.join('');
```
